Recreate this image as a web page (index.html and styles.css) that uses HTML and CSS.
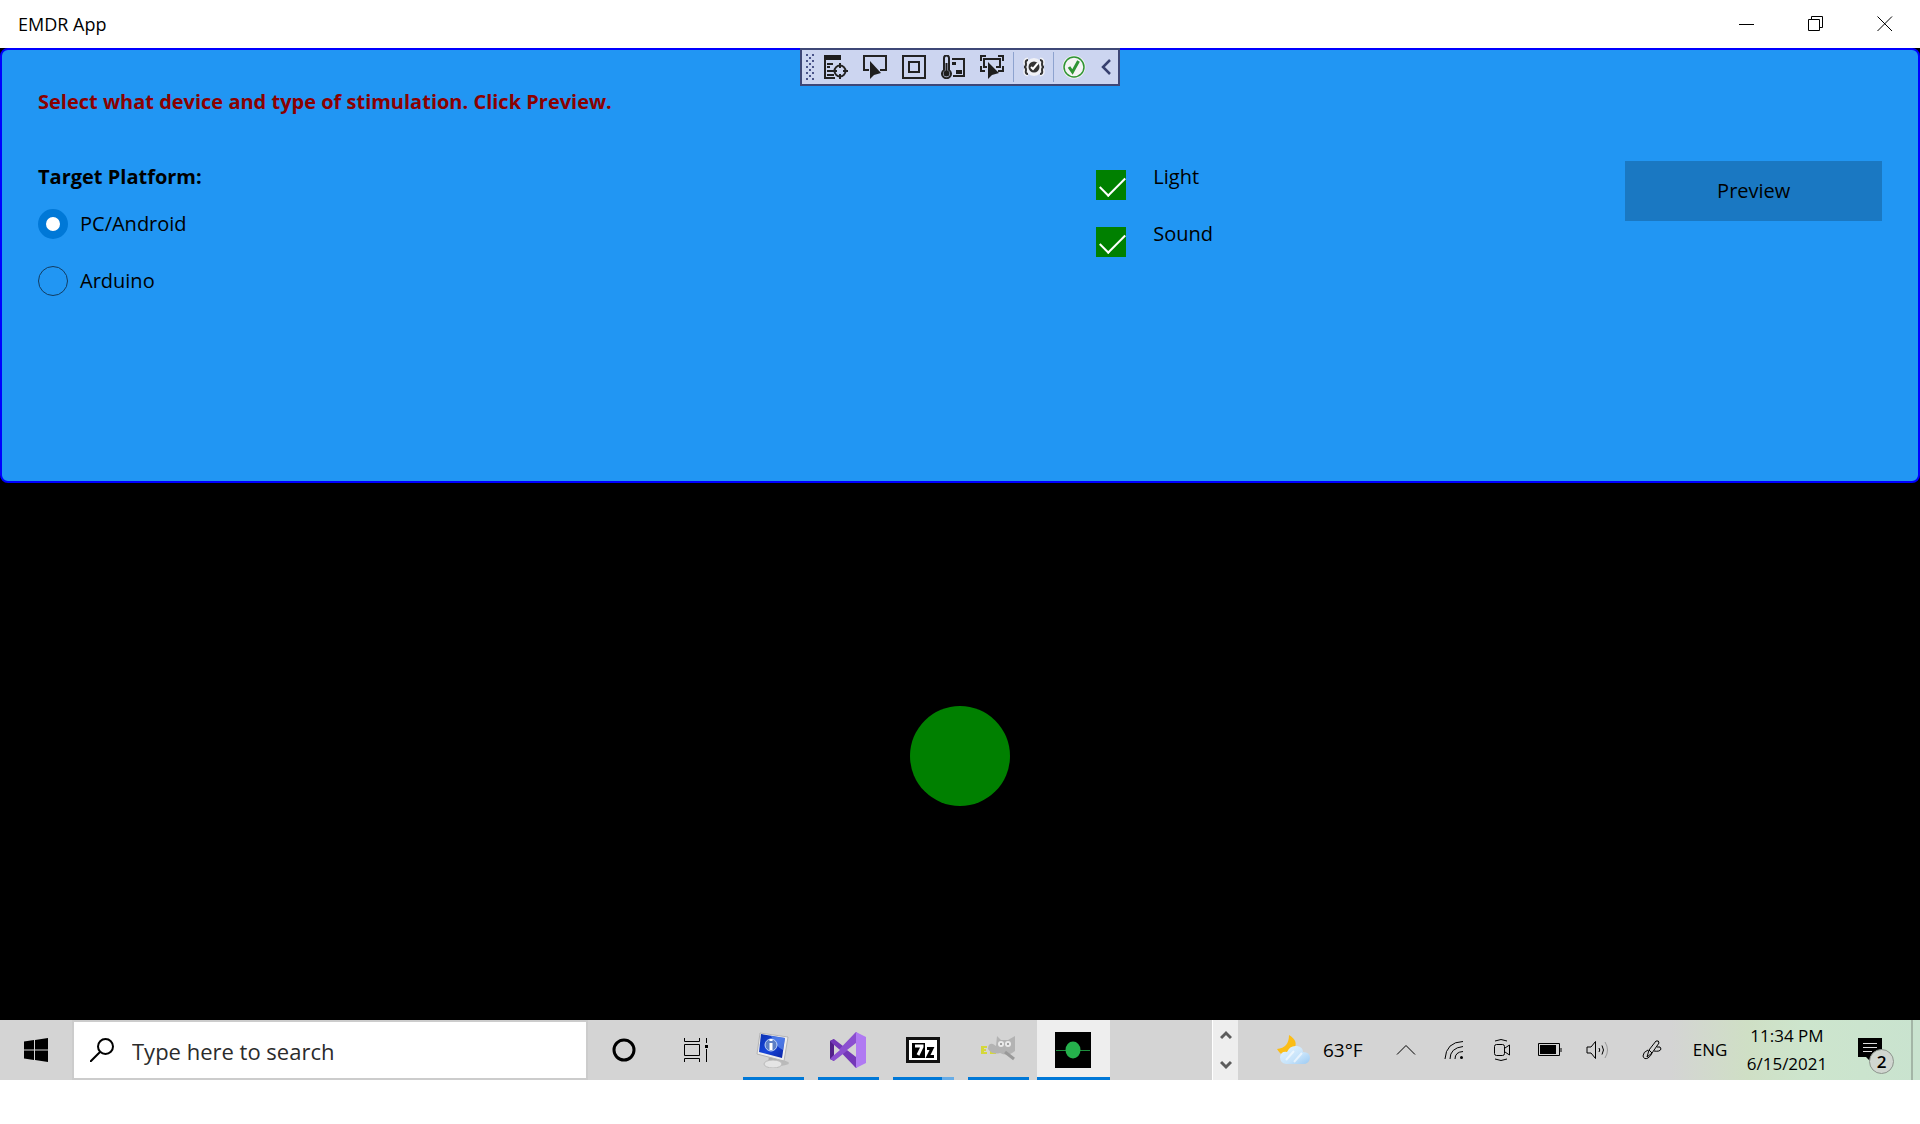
FILE: index.html
```html
<!DOCTYPE html>
<html lang="en">
<head>
<meta charset="utf-8">
<title>EMDR App</title>
<link rel="stylesheet" href="styles.css">
</head>
<body>
<header class="titlebar">
  <h1 class="title">EMDR App</h1>
  <div class="window-controls">
    <button class="window-button" aria-label="Minimize"><svg width="16" height="16"><path d="M0 8.500H15" /></svg></button>
    <button class="window-button" aria-label="Restore"><svg width="16" height="16"><path d="M3.500 3V.5H14.500V11.500H12M.5 3.500H11.500V14.500H.5Z" /></svg></button>
    <button class="window-button" aria-label="Close"><svg width="16" height="16"><path d="M.5 .5L15 15M15 .5L.5 15" /></svg></button>
  </div>
</header>

<main class="app">
  <div class="debug-bar" role="toolbar" aria-label="Debug tools">
    <svg class="grip" width="9" height="28"><path fill="#4a5389" d="M0 1h2v2H0zM6 1h2v2H6zM3 4h2v2H3zM0 7h2v2H0zM6 7h2v2H6zM3 10h2v2H3zM0 13h2v2H0zM6 13h2v2H6zM3 16h2v2H3zM0 19h2v2H0zM6 19h2v2H6zM3 22h2v2H3zM0 25h2v2H0zM6 25h2v2H6z"/></svg>
    <button class="tool" aria-label="Live visual tree"><svg width="24" height="24"><path class="fill" d="M0 0h17v5H0z"/><path d="M1 4V23H11M3 9H9M3 12H6M3 16H8M3 20H10"/><circle cx="16" cy="16" r="5.500"/><path d="M16 8v5M16 19v5M8 16h5M19 16h5"/></svg></button>
    <button class="tool" aria-label="Select element"><svg width="24" height="24"><path d="M6 15H1V1H23V15H17"/><path class="fill" d="M7 6V24L11 20L18 18Z"/></svg></button>
    <button class="tool" aria-label="Layout adorners"><svg width="24" height="24"><path d="M1 1H23V23H1ZM7 7H17V17H7Z"/></svg></button>
    <button class="tool" aria-label="Hot reload settings"><svg width="24" height="24"><path d="M3 15V3a2 2 0 0 1 5 0V15a4.500 4.500 0 1 1-5 0ZM11 4H23V21H12"/><circle class="fill" cx="5.500" cy="18.500" r="3"/><path class="fill" d="M4.500 8h2v9h-2zM11 7h4v3h-4zM15 15h6v4h-6z"/></svg></button>
    <button class="tool" aria-label="Track focus"><svg width="24" height="24"><path d="M1 6V1H6M18 1H23V6M1 11V16H5M18 16H23V11M7 12H4V4H20V12H16"/><path class="fill" d="M8 7V24L12 20L19 18Z"/></svg></button>
    <button class="ruled" aria-label="Binding failures"><svg width="22" height="22" fill="none"><circle cx="11" cy="11" r="9" fill="#f0f1f6"/><path stroke="#f0f1f6" stroke-width="5" d="M5 4Q2 4 3 8Q3 11 1 11Q3 11 3 14Q2 18 5 18M17 4Q20 4 19 8Q19 11 21 11Q19 11 19 14Q20 18 17 18"/><path stroke="#333" stroke-width="2" d="M5 4Q2 4 3 8Q3 11 1 11Q3 11 3 14Q2 18 5 18M17 4Q20 4 19 8Q19 11 21 11Q19 11 19 14Q20 18 17 18"/><circle cx="11" cy="11" r="5.500" fill="#333"/><path d="M8 11L10 13L15 7" stroke="#fff" stroke-width="2"/></svg></button>
    <button class="ruled" aria-label="Hot reload available"><svg width="24" height="24" fill="none"><circle cx="12" cy="12" r="11.500" fill="#f4f4f4"/><circle cx="12" cy="12" r="10" stroke="#2f9433" stroke-width="1.500"/><path d="M7 12L10.500 17L16.500 6" stroke="#2f9433" stroke-width="3"/></svg></button>
    <button class="collapse" aria-label="Collapse"><svg width="10" height="16"><path d="M9 1L2 8L9 15" fill="none" stroke="#37406f" stroke-width="2.500"/></svg></button>
  </div>

  <form class="panel">
    <h2 class="instruction">Select what device and type of stimulation. Click Preview.</h2>
    <div class="options">
      <fieldset class="platform">
        <legend class="legend">Target Platform:</legend>
        <label class="choice"><input class="radio" type="radio" name="platform" checked>PC/Android</label>
        <label class="choice"><input class="radio" type="radio" name="platform">Arduino</label>
      </fieldset>
      <div class="stimulation">
        <div class="check-row"><input class="check" type="checkbox" id="light" checked><label for="light">Light</label></div>
        <div class="check-row"><input class="check" type="checkbox" id="sound" checked><label for="sound">Sound</label></div>
      </div>
      <button class="preview" type="button">Preview</button>
    </div>
  </form>
  <section class="stage"><div class="ball"></div></section>
</main>

<footer class="taskbar">
  <button class="start" aria-label="Start"><svg width="24" height="24"><path class="ink" d="M0 3.500L10 2V11.500H0ZM11 2L24 0V11.500H11ZM0 12.500H10V22L0 20.500ZM11 12.500H24V24L11 22Z"/></svg></button>
  <label class="search">
    <svg width="24" height="24"><circle class="line" cx="15.500" cy="8.500" r="7.500"/><path class="line" d="M10 14L0 24"/></svg>
    <input class="search-input" type="text" placeholder="Type here to search" aria-label="Search">
  </label>
  <button class="shell" aria-label="Cortana"><svg width="24" height="24"><circle cx="12" cy="12" r="10" fill="none" stroke="#000" stroke-width="3"/></svg></button>
  <button class="shell" aria-label="Task view"><svg width="26" height="24"><path class="hair" d="M1.500 0V3.500H16.500V0M1.500 6.500H16.500V17.500H1.500ZM1.500 24V20.500H16.500V24M23.500 0V5M23.500 11V24"/><path class="ink" d="M22 7h3v3h-3z"/></svg></button>
  <nav class="apps">
    <button class="task" aria-label="System information"><svg width="36" height="36" viewBox="0 0 36 36">
      <defs><linearGradient id="scr" x1="0" x2="1" y1="0" y2="1"><stop offset="0" stop-color="#0a2fae"/><stop offset=".5" stop-color="#1746dc"/><stop offset="1" stop-color="#0a22a0"/></linearGradient></defs>
      <ellipse cx="23" cy="31" rx="11" ry="3" fill="#a9a9a9" opacity=".6"/><path d="M14 24L22 26L23 31H13Z" fill="#aaa"/><ellipse cx="18" cy="32" rx="9" ry="4" fill="#e4e4e4" stroke="#bbb"/>
      <path d="M5 1L33 5L29 29L2 22Z" fill="#eee" stroke="#b5b5b5"/><path d="M6 2L30 6L27 26L4 20Z" fill="url(#scr)"/><path d="M16 4L30 6L28 18Q21 15 16 4Z" fill="#6f9cf2" opacity=".6"/><circle cx="16" cy="13" r="6" fill="#5d7fc5" stroke="#c2d4f7"/><path d="M16 11v7M16 7v2" stroke="#fff" stroke-width="3"/></svg></button>
    <button class="task" aria-label="Visual Studio"><svg width="36" height="36" viewBox="0 0 36 36"><path d="M0 9L4 7V29L0 27Z" fill="#52218a"/><path d="M0 9L4 7L27 25V36Q25 36 24 34Z" fill="#7438b8"/><path d="M0 27L24 2Q25 0 27 0V11L4 29Z" fill="#8b4fd0"/><path d="M4 13V23L10 18Z" fill="#d4d4d4"/><path d="M26 11V25L17 18Z" fill="#d4d4d4"/><path d="M26 0L36 5V31L26 36Z" fill="#b07af2"/></svg></button>
    <button class="task grouped" aria-label="7-Zip"><svg width="34" height="26" viewBox="0 0 34 26"><rect width="34" height="26" fill="#111"/><rect x="3" y="3" width="28" height="20" fill="#fff"/><path class="ink" d="M6 6H19V21H6Z"/><path d="M9 9H16V10L12 18" fill="none" stroke="#fff" stroke-width="3"/><path d="M21 11.500H26L22 19.500H28" fill="none" stroke="#000" stroke-width="3"/></svg></button>
    <button class="task" aria-label="GIMP"><svg width="36" height="30" viewBox="0 0 36 30"><path d="M1 11H7V13H4V14H6V16H4V17H7V19H1Z" fill="#d5d83a"/><path d="M10 19V14L13 17L16 13V19M25 14l4 2-3 4z" fill="#d5d83a"/><path d="M17 1L21 5H28L35 1V16Q28 22 20 18Q12 20 8 14Q8 8 13 9L16 11Z" fill="#b3b3b3"/><circle cx="21" cy="9" r="3" fill="#e9e9e9"/><circle cx="28" cy="9" r="3" fill="#e9e9e9"/><circle cx="21" cy="9" r="1" fill="#888"/><circle cx="28" cy="9" r="1" fill="#888"/><path d="M25 17L34 24" stroke="#999" stroke-width="3"/></svg></button>
    <button class="task active" aria-label="EMDR App"><svg width="36" height="36"><path class="ink" d="M0 0h36v36H0z"/><path d="M1 18.500H35" stroke="#1d8f3e"/><ellipse cx="18" cy="18" rx="7.500" ry="8.500" fill="#25b14c"/></svg></button>
  </nav>
  <div class="pager">
    <button class="page-button" aria-label="Scroll up"><svg width="12" height="10"><path d="M1 8L6 3L11 8"/></svg></button>
    <button class="page-button" aria-label="Scroll down"><svg width="12" height="10"><path d="M1 2L6 7L11 2"/></svg></button>
  </div>
  <button class="weather">
    <svg width="34" height="30" viewBox="0 0 34 30"><defs><linearGradient id="cl" x1="0" y1="0" x2="1" y2="1"><stop offset="0" stop-color="#e6f5ff"/><stop offset=".6" stop-color="#c6e3fa"/><stop offset="1" stop-color="#9ccaf3"/></linearGradient></defs><path d="M12 0Q22 6 17 14L6 20Q3 19 0 14Q12 13 12 0Z" fill="#fbbd16"/><path d="M9 29Q3 28 3 22Q4 16 10 17Q13 10 20 11Q26 12 26 17Q33 17 33 23Q32 29 26 29Z" fill="url(#cl)"/><path d="M9 25L17 16M17 27L25 18" stroke="#fff" stroke-width="2" opacity=".6"/></svg>
    <span>63°F</span>
  </button>
  <button class="tray" aria-label="Show hidden icons"><svg width="20" height="12"><path class="hair" d="M1 10.500L10 1.500L19 10.500"/></svg></button>
  <button class="tray" aria-label="Network"><svg width="20" height="20"><path class="hair" d="M1 19Q2 2 19 1.500M6 19Q6 8 19 6.500M11 19Q11 12 19 11.500"/><circle class="ink" cx="17.500" cy="17.500" r="1.500"/></svg></button>
  <button class="tray" aria-label="Meet now"><svg width="18" height="24"><path class="hair" d="M2 3Q8 0 14 3M2 21Q8 24 14 21"/><rect class="hair" x="1.500" y="6.500" width="10" height="11" rx="2"/><path class="hair" d="M12 10L16.500 7V17L12 14"/></svg></button>
  <button class="tray" aria-label="Battery"><svg width="24" height="14"><path class="hair" d="M.5 .5H21.500V12.500H.5ZM23 5V9"/><path class="ink" d="M2 2h16v9H2z"/></svg></button>
  <button class="tray" aria-label="Volume"><svg width="24" height="20"><path class="hair" d="M1 7H5L9.500 1.500V18.500L5 13H1ZM13 8Q14.500 10 13 12M16 5.500Q19 10 16 14.500"/><path class="hair faint" d="M19 2Q24 10 19 18"/></svg></button>
  <button class="tray wide" aria-label="Pen workspace"><svg width="20" height="20"><path class="hair" d="M5 17L7 10L14 1Q17 0 17 3L10 13L5 17ZM7 10L10 13M6 10Q1 12 1 16Q2 20 6 18Q9 16 10 13M15 7Q19 6 19 9Q18 12 12 11"/></svg></button>
  <button class="language">ENG</button>
  <button class="clock"><time>11:34 PM</time><time>6/15/2021</time></button>
  <button class="notifications" aria-label="Notifications"><svg width="24" height="24"><path class="ink" d="M0 0H24V19H13V24L8 19H0Z"/><path d="M5 5.500H19M5 9.500H19M5 13.500H14" stroke="#ddd"/></svg><span class="badge">2</span></button>
  <button class="show-desktop" aria-label="Show desktop"></button>
</footer>
</body>
</html>
```

FILE: styles.css
```css
* { box-sizing: border-box; }
body {
  margin: 0;
  background: #fff;
  color: #000;
  font: 20px/28px "Open Sans", "Noto Sans", sans-serif;
}
button { margin: 0; padding: 0; border: 0; background: none; color: inherit; font: inherit; }
svg { display: block; flex: none; }
h1, h2 { margin: 0; }

.titlebar { display: flex; justify-content: space-between; height: 48px; padding-right: 1px; }
.title { padding: 10px 18px; font-size: 18px; font-weight: 400; }
.window-controls { display: flex; }
.window-button { display: grid; place-items: center; width: 69px; }
.window-button path { fill: none; stroke: #000; }

.app { position: relative; background: #000; }
.debug-bar {
  position: absolute;
  top: 0;
  left: 50%;
  transform: translateX(-50%);
  display: flex;
  align-items: center;
  width: 320px;
  height: 38px;
  padding-left: 4px;
  border: 2px solid #3e4777;
  background: #ccd5f0;
}
.grip { margin-right: 1px; }
.tool, .ruled, .collapse { flex: none; display: grid; place-items: center; height: 30px; }
.tool { width: 39px; }
.tool path, .tool circle { stroke: #222; stroke-width: 2; fill: none; }
.tool .fill { fill: #1e1e1e; stroke: none; }
.ruled { width: 40px; border-left: 1px solid #8ea3cf; }
.tool + .ruled { margin-left: 2px; }
.collapse { width: 26px; }

.panel {
  min-height: 435px;
  padding: 38px 36px;
  border: 2px solid #00f;
  border-radius: 8px;
  background: #2196f3;
}
.instruction { margin-bottom: 45px; color: #8b0000; font-size: 20px; font-weight: 700; }
.options { display: grid; grid-template-columns: repeat(7, 1fr); gap: 8px; align-items: start; }
.platform { grid-column: span 4; margin: 0; padding: 0; border: 0; }
.legend { padding: 2px 0 4px; font-weight: 700; }
.choice { display: flex; align-items: center; gap: 12px; height: 57px; }
.radio, .check { flex: none; width: 30px; height: 30px; margin: 0; appearance: none; }
.radio { border: 1px solid #123c61; border-radius: 50%; }
.radio:checked { border: 8px solid #0078d7; background: #fff; }
.stimulation { grid-column: span 2; }
.check-row { display: flex; gap: 27px; height: 57px; padding-top: 2px; }
.check { margin-top: 7px; background: green; }
.check:checked::after {
  content: "";
  display: block;
  width: 23px;
  height: 11px;
  margin: 7px 0 0 4px;
  border: solid #fff;
  border-width: 0 0 2px 2px;
  transform: rotate(-45deg);
}
.preview { height: 60px; background: #1a78c2; }
.stage { display: grid; place-items: center; min-height: 537px; padding-top: 8px; }
.ball { width: 100px; height: 100px; border-radius: 50%; background: green; }

.taskbar {
  display: flex;
  height: 60px;
  background: linear-gradient(90deg, #d4d4d4 87%, #cfdfc5 91%, #cde5cd 94%, #c9e3cf);
}
.taskbar button { flex: none; display: grid; place-items: center; }
.ink { fill: #000; }
.line, .hair { fill: none; stroke: #000; }
.line { stroke-width: 2; }
.hair.faint { stroke: #999; }
.taskbar .start { width: 72px; }
.search {
  display: flex;
  align-items: center;
  gap: 18px;
  width: 516px;
  padding-left: 16px;
  border: 2px solid #ccc;
  background: #fff;
}
.search-input { flex: 1; min-width: 0; padding: 2px 0 0; border: 0; outline: 0; background: none; font: inherit; font-size: 22px; }
.search-input::placeholder { color: #2b2b2b; opacity: 1; }
.taskbar .shell { width: 72px; }
.apps { flex: 1; display: flex; padding-left: 4px; }
.taskbar .task { width: 75px; padding-right: 1px; border: solid transparent; border-width: 0 7px; background: linear-gradient(#0078d7, #0078d7) bottom / 100% 3px no-repeat padding-box; }
.taskbar .grouped { background-image: linear-gradient(90deg, #0078d7 80%, #67ace6 80%); }
.taskbar .active { border-width: 0 1px; background-color: #eee; }
.pager { display: grid; width: 26px; border-left: 1px solid #fff; background: #eee; }
.page-button path { fill: none; stroke: #5c5c5c; stroke-width: 3; }
.taskbar .weather { display: flex; align-items: center; gap: 12px; width: 144px; padding-left: 39px; font-size: 19px; }
.taskbar .tray { width: 48px; }
.taskbar .wide { width: 60px; }
.taskbar .language { width: 56px; font-size: 17px; }
.taskbar .clock { width: 98px; align-content: center; font-size: 17px; }
.taskbar .notifications { position: relative; width: 75px; padding-right: 8px; }
.badge {
  position: absolute;
  top: 29px;
  left: 33px;
  width: 25px;
  height: 25px;
  border: 1px solid #8d958d;
  border-radius: 50%;
  background: #d0d6d0;
  font-size: 17px;
  font-weight: 600;
  line-height: 23px;
}
.taskbar .show-desktop { width: 9px; border-left: 2px solid #a3b5a6; }
```
